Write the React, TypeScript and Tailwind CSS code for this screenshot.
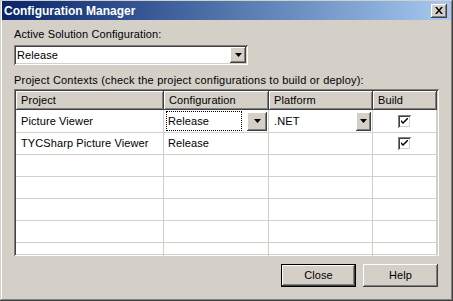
import React from 'react';

const raised =
  'shadow-[inset_-1px_-1px_#404040,inset_1px_1px_#ffffff,inset_-2px_-2px_#808080,inset_2px_2px_#d4d0c8]';
const sunken =
  'shadow-[inset_1px_1px_#808080,inset_-1px_-1px_#ffffff,inset_2px_2px_#404040,inset_-2px_-2px_#d4d0c8]';

const Arrow = () => (
  <svg width="7" height="4" viewBox="0 0 7 4">
    <path d="M0 0h7L3.5 4z" fill="#000" />
  </svg>
);

const DropButton = ({ className = '' }: { className?: string }) => (
  <div className={`flex items-center justify-center bg-[#d4d0c8] ${raised} ${className}`}>
    <Arrow />
  </div>
);

const Check = () => (
  <div className={`w-[13px] h-[13px] bg-white flex items-center justify-center ${sunken}`}>
    <svg width="7" height="7" viewBox="0 0 7 7">
      <path d="M0 2l2 2 5-5v2l-5 5-2-2z" fill="#000" />
    </svg>
  </div>
);

const rows = [
  { project: 'Picture Viewer', config: 'Release', platform: '.NET', build: true, active: true },
  { project: 'TYCSharp Picture Viewer', config: 'Release', platform: '', build: true, active: false },
  null,
  null,
  null,
  null,
  null,
];

export default function App() {
  return (
    <div className="w-[453px] h-[301px] bg-[#d4d0c8] p-[2px] pt-[1px] shadow-[inset_-1px_-1px_#404040,inset_1px_1px_#d4d0c8,inset_-2px_-2px_#808080,inset_2px_2px_#ffffff] font-['Liberation_Sans',sans-serif] text-[11px] text-black flex flex-col">
      {/* title bar */}
      <div className="h-[19px] bg-gradient-to-r from-[#0a246a] to-[#a6caf0] flex items-center justify-between pl-[2px] pr-[4px]">
        <span className="text-white font-bold text-[12px]">Configuration Manager</span>
        <div className={`w-[16px] h-[14px] bg-[#d4d0c8] flex items-center justify-center ${raised}`}>
          <svg width="8" height="7" viewBox="0 0 8 7">
            <path d="M0 0h2l2 2.5L6 0h2L5 3.5 8 7H6L4 4.5 2 7H0l3-3.5z" fill="#000" />
          </svg>
        </div>
      </div>

      <div className="flex flex-col px-[12px] pr-[11px] tracking-[0.1px]">
        <div className="mt-[8px] leading-[13px]">Active Solution Configuration:</div>
        <div className={`mt-[4px] w-[234px] h-[20px] bg-white flex items-center justify-between p-[2px] ${sunken}`}>
          <span className="pl-[1px]">Release</span>
          <DropButton className="w-[16px] h-[16px]" />
        </div>
        <div className="mt-[9px] leading-[13px] tracking-[0.2px]">Project Contexts (check the project configurations to build or deploy):</div>

        {/* grid */}
        <div className={`mt-[2px] w-[425px] h-[167px] bg-white p-[2px] overflow-hidden ${sunken}`}>
          <div className="grid grid-cols-[148px_105px_104px_64px] h-[19px] bg-[#d4d0c8]">
            {['Project', 'Configuration', 'Platform', 'Build'].map((h) => (
              <div key={h} className={`flex items-center pl-[5px] ${raised}`}>
                {h}
              </div>
            ))}
          </div>
          {rows.map((r, i) => (
            <div
              key={i}
              className={`grid grid-cols-[148px_105px_104px_64px] border-b border-[#d4d0c8] ${i === 0 ? 'h-[23px]' : 'h-[22px]'}`}
            >
              <div className="border-r border-[#d4d0c8] flex items-center pl-[5px]">{r?.project}</div>
              <div className="border-r border-[#d4d0c8] flex items-center">
                {r?.active ? (
                  <div className="flex items-center w-full h-full py-[1px]">
                    <div className="ml-[2px] w-[76px] h-[20px] border border-dotted border-black flex items-center pl-[1px]">
                      {r.config}
                    </div>
                    <DropButton className="ml-[5px] w-[20px] h-[19px]" />
                  </div>
                ) : (
                  <span className="pl-[4px]">{r?.config}</span>
                )}
              </div>
              <div className="border-r border-[#d4d0c8] flex items-center justify-between">
                <span className="pl-[5px]">{r?.platform}</span>
                {r?.active && <DropButton className="mr-[1px] w-[15px] h-[19px]" />}
              </div>
              <div className="border-r border-[#d4d0c8] flex items-center justify-center">
                {r?.build && <Check />}
              </div>
            </div>
          ))}
        </div>

        <div className="mt-[8px] flex justify-end gap-[7px] pr-[2px]">
          <div className="w-[75px] h-[23px] border border-black">
            <div className={`w-full h-full bg-[#d4d0c8] flex items-center justify-center ${raised}`}>Close</div>
          </div>
          <div className={`w-[75px] h-[23px] bg-[#d4d0c8] flex items-center justify-center ${raised}`}>Help</div>
        </div>
      </div>
    </div>
  );
}
